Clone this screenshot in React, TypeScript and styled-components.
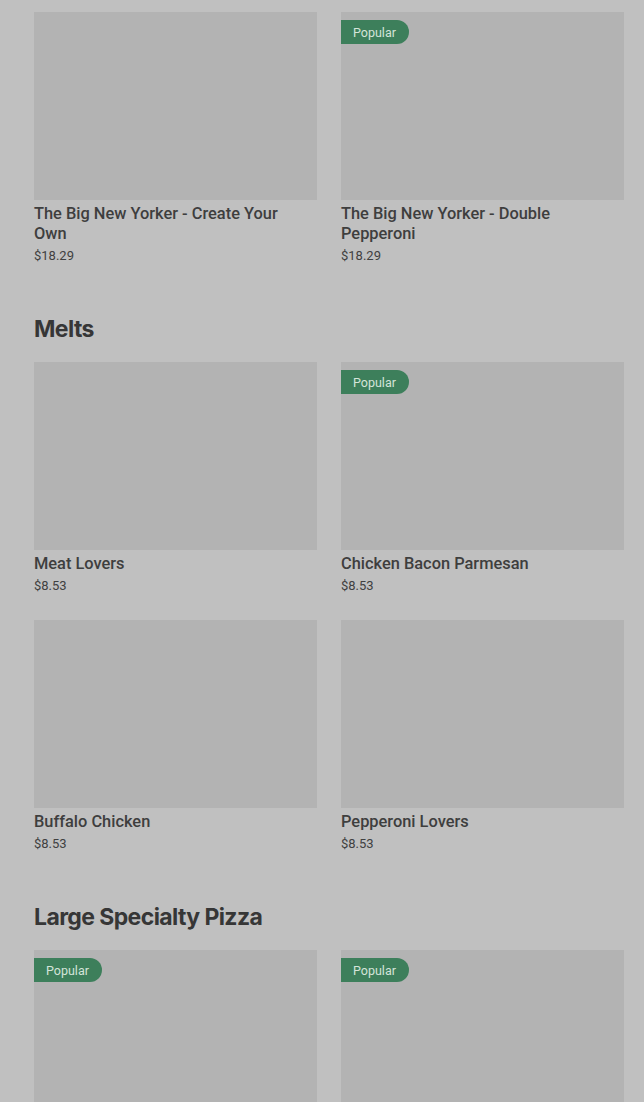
import * as React from 'react';
import styled, { createGlobalStyle } from 'styled-components';

const GlobalStyle = createGlobalStyle`
  html, body {
    margin: 0;
    padding: 0;
    background: #c0c0c0;
  }
  body {
    font-family: Roboto, "Liberation Sans", sans-serif;
    color: #3a3a3a;
  }
`

const Page = styled.main`
  padding: 12px 20px 0 34px;
  background: #c0c0c0;
  height: 100vh;
  box-sizing: border-box;
  overflow: hidden;
`
const Section = styled.section`
  & + & {
    margin-top: 48px;
  }
`
const Heading = styled.h2`
  margin: 0 0 17px;
  font-family: Inter, "Liberation Sans", sans-serif;
  font-weight: 700;
  font-size: 23px;
  line-height: 32px;
  letter-spacing: -0.6px;
  color: #363636;
`
const Grid = styled.div`
  display: grid;
  grid-template-columns: 1fr 1fr;
  column-gap: 24px;
  row-gap: 25px;
`
const Card = styled.article`
  display: flex;
  flex-direction: column;
`
const Thumb = styled.div`
  position: relative;
  height: 188px;
  background: #b3b3b3;
`
const Badge = styled.span`
  position: absolute;
  top: 8px;
  left: 0;
  height: 24px;
  padding: 0 13px 0 12px;
  display: flex;
  align-items: center;
  background: #3d7f5b;
  color: #d4e4d9;
  font-size: 12.5px;
  border-radius: 0 12px 12px 0;
`
const Title = styled.h3`
  margin: 4px 0 0;
  padding-right: 24px;
  font-size: 16.4px;
  font-weight: 500;
  line-height: 20px;
  color: #3e3e3e;
`
const Price = styled.div`
  margin-top: 3px;
  font-size: 13px;
  line-height: 18px;
  color: #404040;
`

type Item = { name: string; price: string; popular?: boolean }

const sections: { title?: string; items: Item[] }[] = [
  {
    items: [
      { name: 'The Big New Yorker - Create Your Own', price: '$18.29' },
      { name: 'The Big New Yorker - Double Pepperoni', price: '$18.29', popular: true },
    ],
  },
  {
    title: 'Melts',
    items: [
      { name: 'Meat Lovers', price: '$8.53' },
      { name: 'Chicken Bacon Parmesan', price: '$8.53', popular: true },
      { name: 'Buffalo Chicken', price: '$8.53' },
      { name: 'Pepperoni Lovers', price: '$8.53' },
    ],
  },
  {
    title: 'Large Specialty Pizza',
    items: [
      { name: 'Pepperoni Lovers', price: '$19.99', popular: true },
      { name: 'Meat Lovers', price: '$19.99', popular: true },
    ],
  },
]

const MenuCard = ({ item }: { item: Item }) => (
  <Card>
    <Thumb>{item.popular && <Badge>Popular</Badge>}</Thumb>
    <Title>{item.name}</Title>
    <Price>{item.price}</Price>
  </Card>
)

export default function App() {
  return (
    <>
      <GlobalStyle />
      <Page>
        {sections.map((s, i) => (
          <Section key={i}>
            {s.title && <Heading>{s.title}</Heading>}
            <Grid>
              {s.items.map((it, j) => (
                <MenuCard key={j} item={it} />
              ))}
            </Grid>
          </Section>
        ))}
      </Page>
    </>
  )
}
